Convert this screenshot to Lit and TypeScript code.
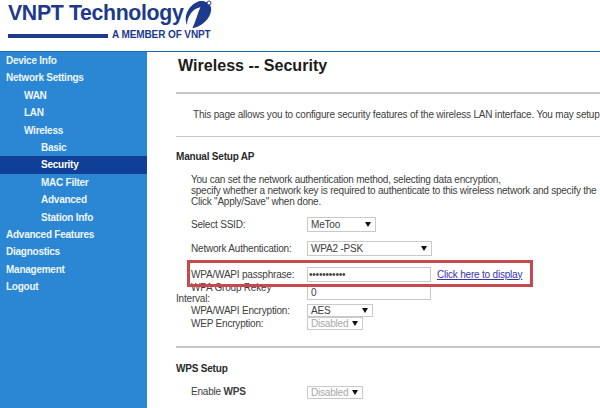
import { LitElement, html, css } from "lit";
import { customElement } from "lit/decorators.js";

const NAV: [string, number, boolean?][] = [
  ["Device Info", 0], ["Network Settings", 0], ["WAN", 1], ["LAN", 1], ["Wireless", 1],
  ["Basic", 2], ["Security", 2, true], ["MAC Filter", 2], ["Advanced", 2], ["Station Info", 2],
  ["Advanced Features", 0], ["Diagnostics", 0], ["Management", 0], ["Logout", 0],
];

@customElement("app-root")
export class AppRoot extends LitElement {
  static styles = css`
    :host { display: block; width: 600px; height: 408px; overflow: hidden; background: #fff; position: relative;
      font-family: "Liberation Sans", Arial, sans-serif; color: #404040; font-size: 10px; letter-spacing: -0.2px; }
    .header { height: 51px; display: flex; flex-direction: column; padding-left: 8px; box-sizing: border-box; background: #fff; }
    .brand { display: flex; height: 30px; }
    .name { font-weight: 700; font-size: 21.3px; letter-spacing: -0.35px; color: #1d3a8c; line-height: 26px; white-space: nowrap; width: 175px; }
    .tag { display: flex; align-items: center; height: 12px; margin-top: -2px; }
    .bar { width: 100px; height: 4px; background: #1d3a8c; margin: 3px 4px 0 0; }
    .tagtext { font-weight: 700; font-size: 10px; color: #1d3a8c; white-space: nowrap; letter-spacing: -0.1px; }
    .body { display: flex; height: 357px; border-top: 1.5px solid #1b68ac; }
    .side { width: 147px; flex: none; background: #2b87d3; box-sizing: border-box; }
    .item { height: 17.4px; line-height: 17.4px; font-weight: 700; font-size: 10px; letter-spacing: -0.25px; color: #eef6fd; white-space: nowrap; }
    .l0 { padding-left: 6px; } .l1 { padding-left: 24px; } .l2 { padding-left: 41px; }
    .active { background: #103f97; color: #fff; }
    .main { flex: 1; min-width: 0; padding-left: 29px; overflow: hidden; }
    h1 { margin: 0; font-size: 16.1px; letter-spacing: 0; line-height: 20px; padding: 3px 0 0 2px; color: #1c1c1c; font-weight: 700; white-space: nowrap; }
    .rule { height: 2px; background: #c6c6c6; }
    .thin { height: 1px; }
    .r1 { margin-top: 17px; }
    .intro { margin: 0; padding-left: 17px; height: 42px; line-height: 42px; white-space: nowrap; }
    .h2 { font-weight: 700; color: #2a2a2a; line-height: 12px; white-space: nowrap; }
    .s1 { margin-top: 14px; }
    .desc { margin: 11px 0 0 15px; line-height: 11px; white-space: nowrap; letter-spacing: -0.23px; }
    .rows { margin-top: 5.5px; display: grid; grid-template-columns: 131px 1fr; align-items: center; }
    .label { padding-left: 15px; white-space: nowrap; line-height: 12px; }
    .wrap { white-space: normal; padding: 0; text-indent: 15px; line-height: 11px; width: 115px; }
    .ctl { display: flex; align-items: center; }
    .select, input { box-sizing: border-box; border: 1px solid #c9c9c9; background: #fff; font: inherit; letter-spacing: inherit; color: #404040; height: 15px; padding: 0 3px; margin: 0; outline: none; border-radius: 0; }
    .select { display: flex; align-items: center; justify-content: space-between; padding-right: 4px; }
    .small { height: 13px; }
    .select svg { width: 6px; height: 5px; }
    .dis { color: #a8a8a8; }
    input { width: 124px; }
    input[type="password"] { padding-left: 1px; }
    a { color: #3a33b0; margin-left: 6px; text-decoration: underline; white-space: nowrap; }
    .mark { position: absolute; left: 187px; top: 260px; width: 346px; height: 27px; box-sizing: border-box; border: 3px solid #c9484e; pointer-events: none; }
    .r3 { margin-top: 15.5px; }
    .s2 { margin-top: 15px; }
    .wps { margin-top: 10.5px; }
    .h24 { height: 24px; line-height: 24px; }
    .pass { height: 15px; line-height: 15px; margin-top: 6px; }
    .h13 { height: 13.5px; line-height: 13.5px; }
    svg.logo { width: 32px; height: 30px; flex: none; }
  `;

  private select(text: string, width: number, extra = "") {
    return html`<div class="select ${extra}" style="width:${width}px"><span>${text}</span><svg viewBox="0 0 6 5"><path d="M0 0h6L3 5z" fill="#111"/></svg></div>`;
  }

  render() {
    return html`
      <div class="header">
        <div class="brand">
          <div class="name">VNPT Technology</div>
          <svg class="logo" viewBox="0 0 96 90">
            <path d="M28 85C60 80 88 50 84 22 80 10 70 2 50 3 20 12 0 45 12 75 12 50 30 25 52 22 42 45 38 65 28 85Z" fill="#1d3a8c"/>
            <circle cx="78" cy="9" r="6" fill="#fff" stroke="#1d3a8c" stroke-width="3"/>
          </svg>
        </div>
        <div class="tag"><span class="bar"></span><span class="tagtext">A MEMBER OF VNPT</span></div>
      </div>
      <div class="body">
        <nav class="side">
          ${NAV.map(([t, l, a]) => html`<div class="item l${l} ${a ? "active" : ""}">${t}</div>`)}
        </nav>
        <main class="main">
          <h1>Wireless -- Security</h1>
          <div class="rule r1"></div>
          <p class="intro">This page allows you to configure security features of the wireless LAN interface. You may setup</p>
          <div class="rule thin"></div>
          <div class="h2 s1">Manual Setup AP</div>
          <div class="desc">You can set the network authentication method, selecting data encryption,<br>specify whether a network key is required to authenticate to this wireless network and specify the<br>Click "Apply/Save" when done.</div>
          <div class="rows">
            <div class="label h24">Select SSID:</div><div class="ctl h24">${this.select("MeToo", 69)}</div>
            <div class="label h24">Network Authentication:</div><div class="ctl h24">${this.select("WPA2 -PSK", 125)}</div>
            <div class="label pass">WPA/WAPI passphrase:</div><div class="ctl pass"><input type="password" value="..........." readonly /><a>Click here to display</a></div>
            <div class="label wrap">WPA Group Rekey Interval:</div><div class="ctl"><input value="0" readonly /></div>
            <div class="label h13">WPA/WAPI Encryption:</div><div class="ctl h13">${this.select("AES", 66, "small")}</div>
            <div class="label h13">WEP Encryption:</div><div class="ctl h13">${this.select("Disabled", 56, "small dis")}</div>
          </div>
          <div class="rule r3"></div>
          <div class="h2 s2">WPS Setup</div>
          <div class="rows wps">
            <div class="label">Enable <b>WPS</b></div><div class="ctl">${this.select("Disabled", 56, "small dis")}</div>
          </div>
        </main>
        <div class="mark"></div>
      </div>
    `;
  }
}
